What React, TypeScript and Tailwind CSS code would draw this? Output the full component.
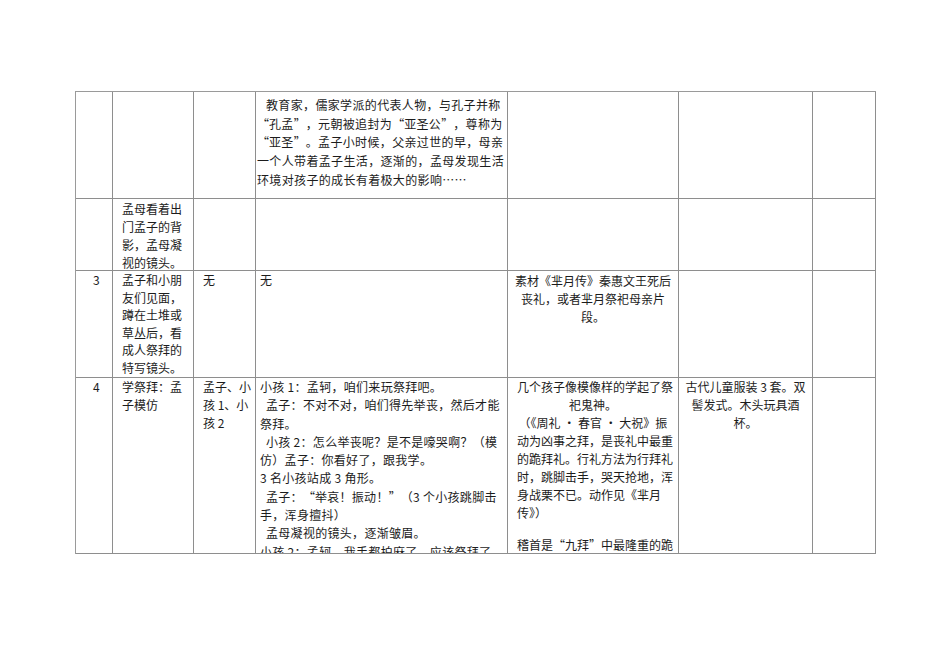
const font = { fontFamily: '"Noto Sans CJK SC", "Liberation Sans", sans-serif' };

// wide curly quotes, the way the source document sets them
function fmt(s: string) {
    const parts: React.ReactNode[] = [];
    let buf = "";
    [...s].forEach((ch, i) => {
        if (ch === "“" || ch === "”") {
            if (buf) parts.push(buf);
            buf = "";
            parts.push(
                <span key={i} className={"inline-block w-[12px] " + (ch === "“" ? "text-right" : "text-left")}>
                    {ch}
                </span>
            );
        } else {
            buf += ch;
        }
    });
    if (buf) parts.push(buf);
    return parts;
}

function Lines({ lines, indent = "pl-[7px]", className = "" }: { lines: string[]; indent?: string; className?: string }) {
    return (
        <>
            {lines.map((l, i) =>
                l.startsWith(" ") ? (
                    <div key={i} className={"whitespace-nowrap " + indent + " " + className}>{fmt(l.slice(1))}</div>
                ) : l ? (
                    <div key={i} className={"whitespace-nowrap " + className}>{fmt(l)}</div>
                ) : (
                    <div key={i} className="h-[14px]" />
                )
            )}
        </>
    );
}

function Cell({ children, className = "" }: { children?: React.ReactNode; className?: string }) {
    return <div className={"border-r border-b border-[#8e8e8e] overflow-hidden " + className}>{children}</div>;
}

export default function App() {
    return (
        <div className="w-[950px] h-[672px] bg-white pt-[91px] pl-[75px] text-[12px] leading-[18px] text-[#1c1c1c]" style={font}>
            <div className="grid w-[801px] grid-cols-[37px_81px_62px_252px_171px_134px_63px] grid-rows-[107px_72px_107px_176px] border-l border-t border-[#9a9a9a]">
                {/* row 1 */}
                <Cell />
                <Cell />
                <Cell />
                <Cell className="pl-[1px] pt-[4px] leading-[18.7px] tracking-[0.35px]">
                    <Lines
                        indent="pl-[9px]"
                        lines={[
                            " 教育家，儒家学派的代表人物，与孔子并称",
                            "“孔孟”，元朝被追封为“亚圣公”，尊称为",
                            "“亚圣”。孟子小时候，父亲过世的早，母亲",
                            "一个人带着孟子生活，逐渐的，孟母发现生活",
                            "环境对孩子的成长有着极大的影响……",
                        ]}
                    />
                </Cell>
                <Cell />
                <Cell />
                <Cell />

                {/* row 2 */}
                <Cell />
                <Cell className="pl-[9px] pt-[1px]">
                    <Lines lines={["孟母看着出", "门孟子的背", "影，孟母凝", "视的镜头。"]} />
                </Cell>
                <Cell />
                <Cell />
                <Cell />
                <Cell />
                <Cell />

                {/* row 3 */}
                <Cell className="pl-[17px]">3</Cell>
                <Cell className="pl-[9px] leading-[17.6px]">
                    <Lines lines={["孟子和小朋", "友们见面，", "蹲在土堆或", "草丛后，看", "成人祭拜的", "特写镜头。"]} />
                </Cell>
                <Cell className="pl-[9px]">无</Cell>
                <Cell className="pl-[4px]">无</Cell>
                <Cell className="text-center pt-[1px]">
                    <Lines lines={["素材《芈月传》秦惠文王死后", "丧礼，或者芈月祭祀母亲片", "段。"]} />
                </Cell>
                <Cell />
                <Cell />

                {/* row 4 */}
                <Cell className="pl-[17px]">4</Cell>
                <Cell className="pl-[9px]">
                    <Lines lines={["学祭拜：孟", "子模仿"]} />
                </Cell>
                <Cell className="pl-[9px]">
                    <Lines lines={["孟子、小", "孩 1、小", "孩 2"]} />
                </Cell>
                <Cell className="pl-[4px] leading-[18.3px] tracking-[0.3px]">
                    <Lines
                        indent="pl-[6px]"
                        lines={[
                            "小孩 1：孟轲，咱们来玩祭拜吧。",
                            " 孟子：不对不对，咱们得先举丧，然后才能",
                            "祭拜。",
                            " 小孩 2：怎么举丧呢？是不是嚎哭啊？（模",
                            "仿）孟子：你看好了，跟我学。",
                            "3 名小孩站成 3 角形。",
                            " 孟子：“举哀！振动！”（3 个小孩跳脚击",
                            "手，浑身擅抖）",
                            " 孟母凝视的镜头，逐渐皱眉。",
                            "小孩 2：孟轲，我手都拍麻了，应该祭拜了",
                        ]}
                    />
                </Cell>
                <Cell className="pl-[9px]">
                    <div className="text-center pr-[9px]">
                        <Lines lines={["几个孩子像模像样的学起了祭", "祀鬼神。", "（《周礼 · 春官 · 大祝》振"]} />
                    </div>
                    <Lines
                        lines={[
                            "动为凶事之拜，是丧礼中最重",
                            "的跪拜礼。行礼方法为行拜礼",
                            "时，跳脚击手，哭天抢地，浑",
                            "身战栗不已。动作见《芈月",
                            "传》）",
                            "",
                            "稽首是“九拜”中最隆重的跪",
                        ]}
                    />
                </Cell>
                <Cell className="text-center">
                    <Lines lines={["古代儿童服装 3 套。双", "髻发式。木头玩具酒", "杯。"]} />
                </Cell>
                <Cell />
            </div>
        </div>
    );
}
